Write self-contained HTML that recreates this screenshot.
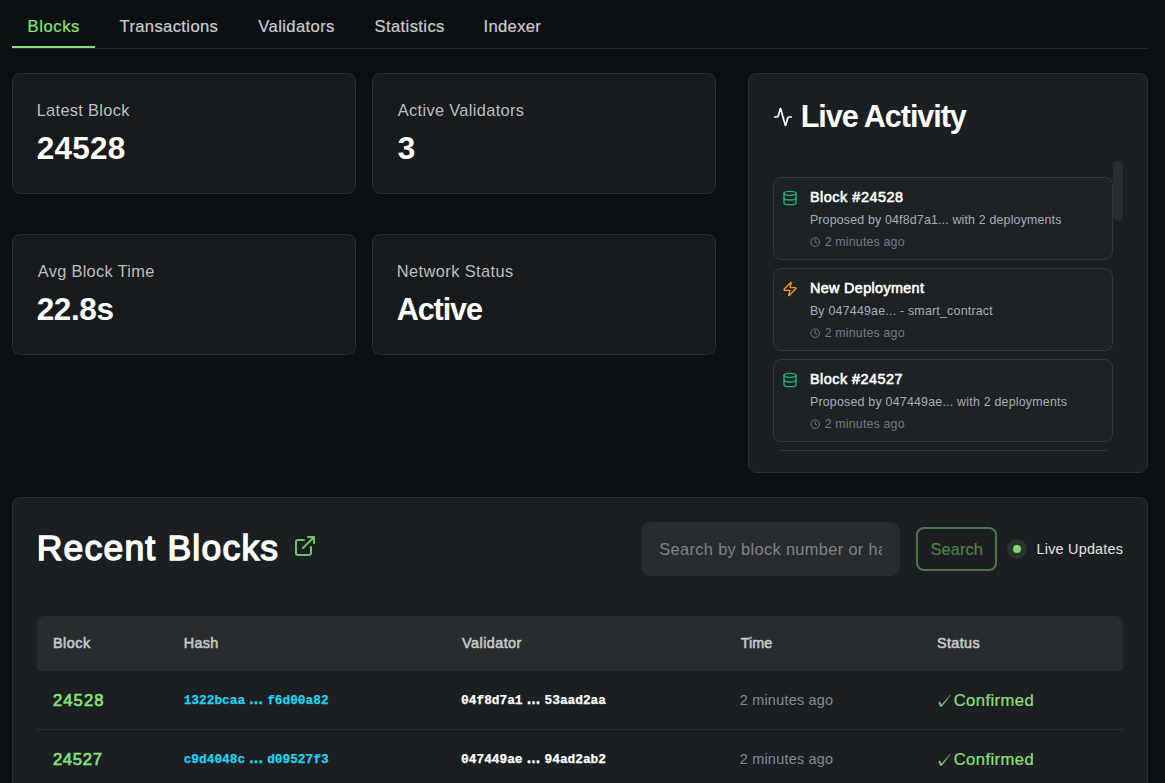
<!DOCTYPE html>
<html lang="en">
<head>
<meta charset="utf-8">
<title>Block Explorer</title>
<style>
*{box-sizing:border-box;margin:0;padding:0}
html,body{width:1165px;height:783px;overflow:hidden;background:#0d1013;color:#fff;
  font-family:"Liberation Sans",sans-serif}
.abs{position:absolute}
.t{position:absolute;white-space:nowrap;display:block}
.mono{font-family:"Liberation Mono",monospace;-webkit-text-stroke:.25px currentColor}
.t i{font-style:normal;font-family:"Liberation Sans",sans-serif;font-size:16px;letter-spacing:.15px;display:inline-block;width:22px;text-align:center;line-height:1;font-weight:700}
.tabs{position:absolute;left:12px;top:0;width:1136px;height:49px}
.tabline{position:absolute;left:0;top:48px;width:1136px;height:1px;background:#26292c}
.tabactive{position:absolute;left:0;top:46px;width:83px;height:2px;background:#86e079}
.card{position:absolute;width:344px;height:121px;background:#181b1d;border:1px solid #2b2e31;border-radius:8px}
.panel{position:absolute;background:#1c1f22;border:1px solid #2b2e31;border-radius:8px}
.live{left:748px;top:73px;width:400px;height:400px}
.scroll{position:absolute;left:24px;top:87px;width:352px;height:290px;overflow:hidden}
.thumb{position:absolute;left:340px;top:0;width:10px;height:60px;border-radius:5px;background:#2a2d30}
.item{position:absolute;left:0;width:340px;height:83px;border:1px solid #34373a;border-radius:8px;background:#1f2225}
.item svg.ic{position:absolute;left:8px;top:12px}
.item svg.ck{position:absolute;left:35.8px;top:58.6px}
.recent{left:12px;top:497px;width:1136px;height:320px}
.input{position:absolute;left:628px;top:24px;width:259px;height:54px;border-radius:9px;background:#292c2f}
.btn{position:absolute;left:903px;top:29px;width:81px;height:44px;border:2px solid #4c7548;border-radius:8px}
.halo{position:absolute;left:994px;top:41px;width:20px;height:20px;border-radius:10px;background:#27352a}
.dot{position:absolute;left:1000px;top:47px;width:8px;height:8px;border-radius:4px;background:#7fd873}
.thead{position:absolute;left:24px;top:118px;width:1086px;height:55px;background:#292c2f;border-radius:8px 8px 0 0}
.row{position:absolute;left:24px;width:1086px;height:59px;border-bottom:1px solid #2b2e31}
</style>
</head>
<body>
<nav class="tabs">
  <div class="tabline"></div>
  <div class="tabactive"></div>
    <span class="t" id="tb1" style="left:15.50px;top:15.75px;font-size:16.6px;line-height:21px;color:#86e079;-webkit-text-stroke:0.22px currentColor;letter-spacing:0.600px">Blocks</span>
    <span class="t" id="tb2" style="left:107.50px;top:15.75px;font-size:16.6px;line-height:21px;color:#c9cbcd;-webkit-text-stroke:0.22px currentColor;letter-spacing:0.364px">Transactions</span>
    <span class="t" id="tb3" style="left:246.30px;top:15.75px;font-size:16.6px;line-height:21px;color:#c9cbcd;-webkit-text-stroke:0.22px currentColor;letter-spacing:0.389px">Validators</span>
    <span class="t" id="tb4" style="left:362.50px;top:15.75px;font-size:16.6px;line-height:21px;color:#c9cbcd;-webkit-text-stroke:0.22px currentColor;letter-spacing:0.389px">Statistics</span>
    <span class="t" id="tb5" style="left:471.50px;top:15.75px;font-size:16.6px;line-height:21px;color:#c9cbcd;-webkit-text-stroke:0.22px currentColor;letter-spacing:0.333px">Indexer</span>
</nav>

<section class="card" style="left:12px;top:73px">
    <span class="t" id="l1" style="left:23.70px;top:26.02px;font-size:16.4px;line-height:20px;color:#bcbec0;letter-spacing:0.318px">Latest Block</span>
    <span class="t" id="v1" style="left:23.70px;top:54.59px;font-size:31.5px;line-height:39px;color:#fff;font-weight:700;letter-spacing:0.250px">24528</span>
</section>
<section class="card" style="left:372px;top:73px">
    <span class="t" id="l2" style="left:24.70px;top:26.02px;font-size:16.4px;line-height:20px;color:#bcbec0;letter-spacing:0.344px">Active Validators</span>
    <span class="t" id="v2" style="left:24.70px;top:54.59px;font-size:31.5px;line-height:39px;color:#fff;font-weight:700">3</span>
</section>
<section class="card" style="left:12px;top:234px">
    <span class="t" id="l3" style="left:24.70px;top:26.39px;font-size:16.4px;line-height:20px;color:#bcbec0;letter-spacing:0.308px">Avg Block Time</span>
    <span class="t" id="v3" style="left:23.70px;top:54.59px;font-size:31.5px;line-height:39px;color:#fff;font-weight:700;letter-spacing:-0.375px">22.8s</span>
</section>
<section class="card" style="left:372px;top:234px">
    <span class="t" id="l4" style="left:23.70px;top:26.39px;font-size:16.4px;line-height:20px;color:#bcbec0;letter-spacing:0.423px">Network Status</span>
    <span class="t" id="v4" style="left:23.70px;top:55.40px;font-size:30.6px;line-height:38px;color:#fff;font-weight:700;letter-spacing:-1.100px">Active</span>
</section>

<section class="panel live">
  <svg class="abs" style="left:24px;top:32.5px" width="20" height="20" viewBox="0 0 24 24" fill="none" stroke="#fff" stroke-width="2" stroke-linecap="round" stroke-linejoin="round"><path d="M22 12h-2.48a2 2 0 0 0-1.93 1.46l-2.35 8.36a.25.25 0 0 1-.48 0L9.24 2.18a.25.25 0 0 0-.48 0l-2.35 8.36A2 2 0 0 1 4.49 12H2"/></svg>
    <span class="t" id="la" style="left:51.70px;top:23.16px;font-size:30.6px;line-height:38px;color:#fff;font-weight:700;letter-spacing:-1.083px">Live Activity</span>
  <div class="scroll">
    <div class="thumb"></div>
    <div class="item" style="top:16px">
    <svg class="ic" width="16" height="16" viewBox="0 0 24 24" fill="none" stroke="#1fb47e" stroke-width="2" stroke-linecap="round" stroke-linejoin="round"><ellipse cx="12" cy="5" rx="9" ry="3"/><path d="M3 5V19A9 3 0 0 0 21 19V5"/><path d="M3 12A9 3 0 0 0 21 12"/></svg>
    <span class="t" id="i1t" style="left:35.90px;top:10.01px;font-size:14.4px;line-height:18px;color:#fff;-webkit-text-stroke:0.58px currentColor;letter-spacing:0.545px">Block #24528</span>
    <span class="t" id="i1d" style="left:35.90px;top:33.70px;font-size:12.4px;line-height:16px;color:#a6adb8;letter-spacing:0.171px">Proposed by 04f8d7a1... with 2 deployments</span>
    <span class="t" id="i1m" style="left:50.70px;top:56.20px;font-size:12.4px;line-height:16px;color:#727986;letter-spacing:0.167px">2 minutes ago</span>
    <svg class="ck" width="10.4" height="10.4" viewBox="0 0 24 24" fill="none" stroke="#727986" stroke-width="2.2" stroke-linecap="round" stroke-linejoin="round"><circle cx="12" cy="12" r="10"/><path d="M12 6v6l4 2"/></svg>
    </div>
    <div class="item" style="top:107px">
    <svg class="ic" width="16" height="16" viewBox="0 0 24 24" fill="none" stroke="#f39c12" stroke-width="2" stroke-linecap="round" stroke-linejoin="round"><path d="M4 14a1 1 0 0 1-.78-1.63l9.9-10.2a.5.5 0 0 1 .86.46l-1.92 6.02A1 1 0 0 0 13 10h7a1 1 0 0 1 .78 1.63l-9.9 10.2a.5.5 0 0 1-.86-.46l1.92-6.02A1 1 0 0 0 11 14z"/></svg>
    <span class="t" id="i2t" style="left:35.90px;top:10.01px;font-size:14.4px;line-height:18px;color:#fff;-webkit-text-stroke:0.58px currentColor;letter-spacing:0.346px">New Deployment</span>
    <span class="t" id="i2d" style="left:35.90px;top:33.70px;font-size:12.4px;line-height:16px;color:#a6adb8;letter-spacing:0.217px">By 047449ae... - smart_contract</span>
    <span class="t" id="i2m" style="left:50.70px;top:56.20px;font-size:12.4px;line-height:16px;color:#727986;letter-spacing:0.167px">2 minutes ago</span>
    <svg class="ck" width="10.4" height="10.4" viewBox="0 0 24 24" fill="none" stroke="#727986" stroke-width="2.2" stroke-linecap="round" stroke-linejoin="round"><circle cx="12" cy="12" r="10"/><path d="M12 6v6l4 2"/></svg>
    </div>
    <div class="item" style="top:198px">
    <svg class="ic" width="16" height="16" viewBox="0 0 24 24" fill="none" stroke="#1fb47e" stroke-width="2" stroke-linecap="round" stroke-linejoin="round"><ellipse cx="12" cy="5" rx="9" ry="3"/><path d="M3 5V19A9 3 0 0 0 21 19V5"/><path d="M3 12A9 3 0 0 0 21 12"/></svg>
    <span class="t" id="i3t" style="left:35.90px;top:10.01px;font-size:14.4px;line-height:18px;color:#fff;-webkit-text-stroke:0.58px currentColor;letter-spacing:0.500px">Block #24527</span>
    <span class="t" id="i3d" style="left:35.90px;top:33.70px;font-size:12.4px;line-height:16px;color:#a6adb8;letter-spacing:0.220px">Proposed by 047449ae... with 2 deployments</span>
    <span class="t" id="i3m" style="left:50.70px;top:56.20px;font-size:12.4px;line-height:16px;color:#727986;letter-spacing:0.167px">2 minutes ago</span>
    <svg class="ck" width="10.4" height="10.4" viewBox="0 0 24 24" fill="none" stroke="#727986" stroke-width="2.2" stroke-linecap="round" stroke-linejoin="round"><circle cx="12" cy="12" r="10"/><path d="M12 6v6l4 2"/></svg>
    </div>
    <div class="item" style="top:289px"></div>
  </div>
</section>

<section class="panel recent">
    <span class="t" id="rbt" style="left:23.70px;top:28.03px;font-size:35.5px;line-height:44px;color:#fff;-webkit-text-stroke:1.42px currentColor;letter-spacing:1.208px">Recent Blocks</span>
    <span class="t" id="sb" style="left:917.50px;top:41.42px;font-size:16.4px;line-height:20px;color:#4f8049;-webkit-text-stroke:0.22px currentColor;letter-spacing:0.100px">Search</span>
    <span class="t" id="lu" style="left:1023.50px;top:42.21px;font-size:14.4px;line-height:18px;color:#e3e4e5;letter-spacing:0.227px">Live Updates</span>
  <svg class="abs" style="left:280px;top:36px" width="24" height="24" viewBox="0 0 24 24" fill="none" stroke="#6fc566" stroke-width="2" stroke-linecap="round" stroke-linejoin="round"><path d="M15 3h6v6"/><path d="M10 14 21 3"/><path d="M18 13v6a2 2 0 0 1-2 2H5a2 2 0 0 1-2-2V8a2 2 0 0 1 2-2h6"/></svg>
  <div class="input">
    <span class="t" id="ph" style="left:18.30px;top:16.88px;font-size:16.4px;line-height:20px;color:#7f8488;letter-spacing:0.340px;width:222.7px;overflow:hidden">Search by block number or hash</span>
  </div>
  <div class="btn"></div>
  <div class="halo"></div>
  <div class="dot"></div>
  <div class="thead">
    <span class="t" id="h1" style="left:15.90px;top:18.21px;font-size:14.4px;line-height:18px;color:#c5c7c9;-webkit-text-stroke:0.58px currentColor;letter-spacing:0.500px">Block</span>
    <span class="t" id="h2" style="left:146.70px;top:18.21px;font-size:14.4px;line-height:18px;color:#c5c7c9;-webkit-text-stroke:0.58px currentColor;letter-spacing:0.333px">Hash</span>
    <span class="t" id="h3" style="left:425.10px;top:18.21px;font-size:14.4px;line-height:18px;color:#c5c7c9;-webkit-text-stroke:0.58px currentColor;letter-spacing:0.437px">Validator</span>
    <span class="t" id="h4" style="left:703.70px;top:18.21px;font-size:14.4px;line-height:18px;color:#c5c7c9;-webkit-text-stroke:0.58px currentColor">Time</span>
    <span class="t" id="h5" style="left:899.90px;top:18.21px;font-size:14.4px;line-height:18px;color:#c5c7c9;-webkit-text-stroke:0.58px currentColor;letter-spacing:0.400px">Status</span>
  </div>
  <div class="row" style="top:173px">
    <span class="t" id="bn1" style="left:15.90px;top:18.85px;font-size:16.6px;line-height:21px;color:#86e079;-webkit-text-stroke:0.66px currentColor;letter-spacing:1.125px">24528</span>
    <span class="t mono" id="hs1" style="left:146.70px;top:20.22px;font-size:12.8px;line-height:16px;color:#22d3ee;font-weight:700">1322bcaa<i>...</i>f6d00a82</span>
    <span class="t mono" id="vl1" style="left:424.10px;top:20.22px;font-size:12.8px;line-height:16px;color:#fff;font-weight:700">04f8d7a1<i>...</i>53aad2aa</span>
    <span class="t" id="tm1" style="left:702.70px;top:20.21px;font-size:14.4px;line-height:18px;color:#868a8e;letter-spacing:0.250px">2 minutes ago</span>
    <span class="t" id="ck1" style="left:897.60px;top:18.59px;font-size:18.27px;line-height:23px;color:#86e079;font-family:'IPAGothic','DejaVu Sans',sans-serif">✓</span>
    <span class="t" id="st1" style="left:916.70px;top:18.75px;font-size:16.6px;line-height:21px;color:#86e079;-webkit-text-stroke:0.22px currentColor;letter-spacing:0.425px">Confirmed</span>
  </div>
  <div class="row" style="top:232px">
    <span class="t" id="bn2" style="left:15.90px;top:18.85px;font-size:16.6px;line-height:21px;color:#86e079;-webkit-text-stroke:0.66px currentColor;letter-spacing:0.750px">24527</span>
    <span class="t mono" id="hs2" style="left:146.70px;top:20.22px;font-size:12.8px;line-height:16px;color:#22d3ee;font-weight:700">c9d4048c<i>...</i>d09527f3</span>
    <span class="t mono" id="vl2" style="left:424.10px;top:20.22px;font-size:12.8px;line-height:16px;color:#fff;font-weight:700">047449ae<i>...</i>94ad2ab2</span>
    <span class="t" id="tm2" style="left:702.70px;top:20.21px;font-size:14.4px;line-height:18px;color:#868a8e;letter-spacing:0.250px">2 minutes ago</span>
    <span class="t" id="ck2" style="left:897.60px;top:18.59px;font-size:18.27px;line-height:23px;color:#86e079;font-family:'IPAGothic','DejaVu Sans',sans-serif">✓</span>
    <span class="t" id="st2" style="left:916.70px;top:18.75px;font-size:16.6px;line-height:21px;color:#86e079;-webkit-text-stroke:0.22px currentColor;letter-spacing:0.425px">Confirmed</span>
  </div>
</section>
</body>
</html>
